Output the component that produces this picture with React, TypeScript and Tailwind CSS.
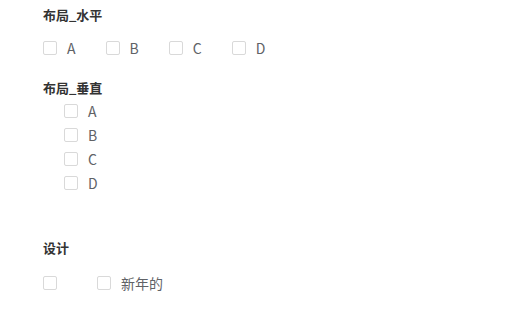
import React from "react"

const font = { fontFamily: '"Noto Sans CJK SC", "Noto Sans", sans-serif' }

function Check({ label }: { label?: string }) {
    return (
        <label className="flex items-center h-6 mr-[30px] cursor-pointer">
            <span className="w-[14px] h-[14px] border border-[#d9d9d9] rounded-[2px] bg-white shrink-0" />
            <span className="pl-[10px] text-[14px] leading-6 text-[#606266]">{label}</span>
        </label>
    )
}

function Heading({ children }: { children: React.ReactNode }) {
    return <div className="h-5 leading-5 text-[13px] font-bold text-[#333]">{children}</div>
}

export default function App() {
    return (
        <div className="bg-white w-[519px] h-[311px] pl-[43px] pt-[5px]" style={font}>
            <Heading>布局_水平</Heading>
            <div className="flex mt-[11px]">
                {["A", "B", "C", "D"].map((l) => (
                    <Check key={l} label={l} />
                ))}
            </div>

            <div className="mt-[18px]">
                <Heading>布局_垂直</Heading>
            </div>
            <div className="flex flex-col pl-[21px] pt-px">
                {["A", "B", "C", "D"].map((l) => (
                    <Check key={l} label={l} />
                ))}
            </div>

            <div className="mt-[43px]">
                <Heading>设计</Heading>
            </div>
            <div className="flex mt-[13px]">
                <Check />
                <Check label="新年的" />
            </div>
        </div>
    )
}
